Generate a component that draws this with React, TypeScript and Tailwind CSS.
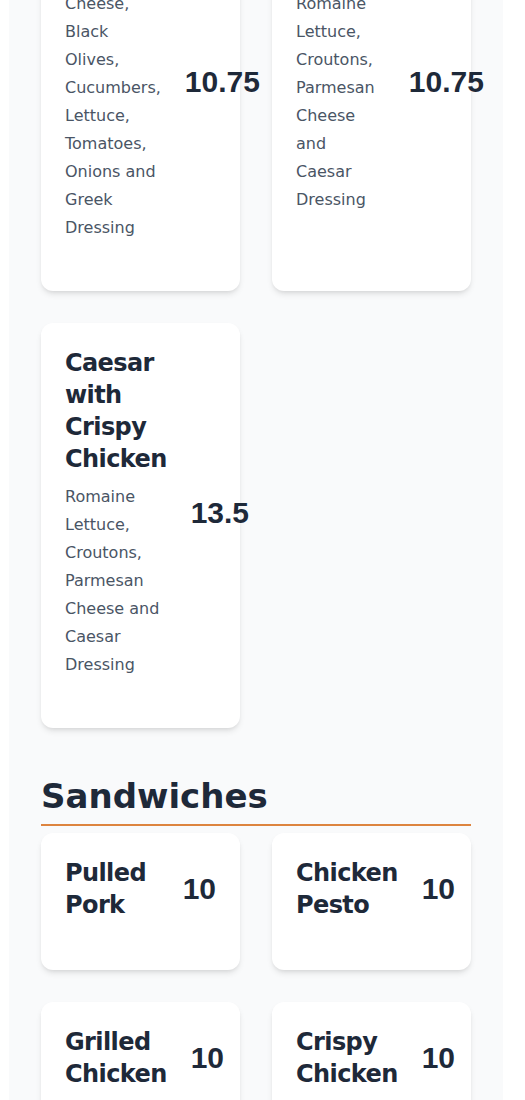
type Item = {
  name: string;
  description?: string;
  price: string;
};

const salads: Item[] = [
  {
    name: 'Greek',
    description:
      'Feta Cheese, Black Olives, Cucumbers, Lettuce, Tomatoes, Onions and Greek Dressing',
    price: '10.75',
  },
  {
    name: 'Caesar',
    description: 'Romaine Lettuce, Croutons, Parmesan Cheese and Caesar Dressing',
    price: '10.75',
  },
  {
    name: 'Caesar with Crispy Chicken',
    description: 'Romaine Lettuce, Croutons, Parmesan Cheese and Caesar Dressing',
    price: '13.5',
  },
];

const sandwiches: Item[] = [
  { name: 'Pulled Pork', price: '10' },
  { name: 'Chicken Pesto', price: '10' },
  { name: 'Grilled Chicken', price: '10' },
  { name: 'Crispy Chicken', price: '10' },
];

function MenuCard({ item }: { item: Item }) {
  return (
    <div className="flex items-center justify-between gap-6 rounded-xl bg-white px-6 pt-6 pb-[49px] shadow-md">
      {/* Nome e descrição */}
      <div className="flex-1">
        <h3 className="text-2xl font-bold tracking-tight text-gray-800">{item.name}</h3>
        {item.description && (
          <p className="mt-2 text-base leading-7 text-gray-600">{item.description}</p>
        )}
      </div>
      {/* Preço */}
      <span className="shrink-0 font-['Liberation_Sans',sans-serif] text-3xl font-bold text-gray-800">
        {item.price}
      </span>
    </div>
  );
}

export default function App() {
  return (
    <div className="h-[1100px] overflow-hidden bg-white font-['DejaVu_Sans',sans-serif]">
      <div className="ml-[9px] w-[494px] bg-gray-50 px-8 pb-24">
        {/* Saladas (página rolada) */}
        <section className="-mt-[102px]">
          <div className="grid grid-cols-2 gap-8">
            {salads.map((item) => (
              <MenuCard key={item.name} item={item} />
            ))}
          </div>
        </section>

        {/* Sanduíches */}
        <section className="mt-12">
          <h2 className="border-b-2 border-[#dd843f] pb-2 text-[34px] leading-10 font-bold text-gray-800">
            Sandwiches
          </h2>
          <div className="mt-[7px] grid grid-cols-2 gap-8">
            {sandwiches.map((item) => (
              <MenuCard key={item.name} item={item} />
            ))}
          </div>
        </section>
      </div>
    </div>
  );
}
